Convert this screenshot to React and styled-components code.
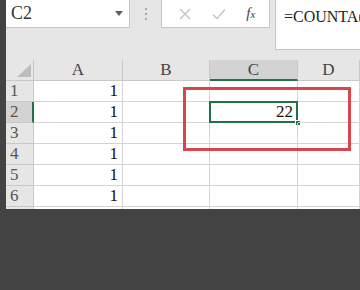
import React from "react";
import styled, { createGlobalStyle } from "styled-components";

const GlobalStyle = createGlobalStyle`
  html, body {
    margin: 0;
    padding: 0;
    background: #434343;
  }
`;

const Page = styled.div`
  width: 360px;
  height: 290px;
  padding-left: 6px;
  box-sizing: border-box;
  background: #434343;
  overflow: hidden;
`;

const Window = styled.div`
  position: relative;
  width: 354px;
  height: 209px;
  background: #e6e6e6;
  overflow: hidden;
  font-family: "Liberation Serif", "DejaVu Serif", serif;
`;

const Toolbar = styled.div`
  display: flex;
  align-items: flex-start;
  height: 60px;
`;

const NameBox = styled.div`
  width: 124px;
  height: 28px;
  box-sizing: border-box;
  background: #fff;
  border: 1px solid #c6c6c6;
  border-top: none;
  border-left: none;
  display: flex;
  align-items: center;
  justify-content: space-between;
  padding: 0 6px 0 5px;
  font-family: "Liberation Serif", serif;
  font-size: 18px;
  color: #333;
`;

const Caret = styled.span`
  width: 0;
  height: 0;
  border-left: 4px solid transparent;
  border-right: 4px solid transparent;
  border-top: 5px solid #606060;
`;

const Dots = styled.div`
  width: 31px;
  height: 28px;
  display: flex;
  flex-direction: column;
  align-items: center;
  justify-content: center;
  gap: 3px;
  span {
    width: 2px;
    height: 2px;
    background: #a8a8a8;
  }
`;

const FuncBox = styled.div`
  width: 109px;
  height: 28px;
  box-sizing: border-box;
  background: #fff;
  border: 1px solid #c6c6c6;
  border-top: none;
  display: flex;
  align-items: center;
  justify-content: space-around;
  padding: 0 4px 0 6px;
`;

const Fx = styled.span`
  font-family: "Liberation Serif", serif;
  font-style: italic;
  font-size: 15px;
  color: #444;
  small {
    font-size: 11px;
  }
`;

const FormulaBox = styled.div`
  margin-left: 5px;
  flex: 1;
  height: 50px;
  box-sizing: border-box;
  background: #fff;
  border: 1px solid #c6c6c6;
  border-top: none;
  border-right: none;
  padding: 8px 0 0 8px;
  font-family: "Liberation Serif", serif;
  font-size: 16px;
  color: #222;
  white-space: nowrap;
  overflow: hidden;
`;

const Grid = styled.div`
  display: grid;
  grid-template-columns: 28px 89px 87px 88px 62px;
  grid-auto-rows: 21px;
  background: #fff;
  font-family: "Liberation Serif", serif;
`;

const Corner = styled.div`
  background: #e6e6e6;
  border-right: 1px solid #c8c8c8;
  border-bottom: 1px solid #c8c8c8;
  box-sizing: border-box;
  display: flex;
  align-items: flex-end;
  justify-content: flex-end;
  padding: 0 2px 3px 0;
`;

const ColHead = styled.div`
  background: ${(p) => (p.$active ? "#d3d3d3" : "#e6e6e6")};
  border-right: 1px solid #c8c8c8;
  border-bottom: ${(p) => (p.$active ? "2px solid #217346" : "1px solid #c8c8c8")};
  box-sizing: border-box;
  display: flex;
  align-items: center;
  justify-content: center;
  font-size: 17px;
  color: #444;
`;

const RowHead = styled.div`
  background: ${(p) => (p.$active ? "#d3d3d3" : "#e6e6e6")};
  border-right: ${(p) => (p.$active ? "2px solid #217346" : "1px solid #c8c8c8")};
  border-bottom: 1px solid #c8c8c8;
  box-sizing: border-box;
  display: flex;
  align-items: center;
  padding-left: 4px;
  font-size: 17px;
  color: #555;
`;

const Cell = styled.div`
  position: relative;
  border-right: 1px solid #d4d4d4;
  border-bottom: 1px solid #d4d4d4;
  box-sizing: border-box;
  display: flex;
  align-items: center;
  justify-content: flex-end;
  padding-right: 4px;
  font-size: 17px;
  color: #111;
  ${(p) =>
    p.$selected &&
    `
    &::before {
      content: "";
      position: absolute;
      left: -1px;
      top: -1px;
      right: -1px;
      bottom: -1px;
      border: 2px solid #217346;
    }
    &::after {
      content: "";
      position: absolute;
      right: -4px;
      bottom: -4px;
      width: 6px;
      height: 6px;
      background: #217346;
      border: 1px solid #fff;
      box-sizing: border-box;
    }
  `}
`;

const Highlight = styled.div`
  position: absolute;
  left: 177px;
  top: 87px;
  width: 168px;
  height: 64px;
  box-sizing: border-box;
  border: 3px solid #d6464c;
  pointer-events: none;
`;

const columns = ["A", "B", "C", "D"];
const rows = [1, 2, 3, 4, 5, 6];

export default function App() {
  return (
    <>
      <GlobalStyle />
      <Page>
        <Window>
          <Toolbar>
            <NameBox>
              C2
              <Caret />
            </NameBox>
            <Dots>
              <span />
              <span />
              <span />
            </Dots>
            <FuncBox>
              <svg width="14" height="14" viewBox="0 0 14 14">
                <path d="M2 2 L12 12 M12 2 L2 12" stroke="#c4c4c4" strokeWidth="1.4" fill="none" />
              </svg>
              <svg width="16" height="14" viewBox="0 0 16 14">
                <path d="M2 7.5 L6 11.5 L14 2.5" stroke="#c4c4c4" strokeWidth="1.4" fill="none" />
              </svg>
              <Fx>
                f<small>x</small>
              </Fx>
            </FuncBox>
            <FormulaBox>=COUNTA(A1:A6)</FormulaBox>
          </Toolbar>
          <Grid>
            <Corner>
              <svg width="14" height="13" viewBox="0 0 14 13">
                <polygon points="14,0 14,13 0,13" fill="#bdbdbd" />
              </svg>
            </Corner>
            {columns.map((c) => (
              <ColHead key={c} $active={c === "C"}>
                {c}
              </ColHead>
            ))}
            {rows.map((r) => (
              <React.Fragment key={r}>
                <RowHead $active={r === 2}>{r}</RowHead>
                <Cell>1</Cell>
                <Cell />
                <Cell $selected={r === 2}>{r === 2 ? 22 : ""}</Cell>
                <Cell />
              </React.Fragment>
            ))}
            <RowHead />
            <Cell />
            <Cell />
            <Cell />
            <Cell />
          </Grid>
          <Highlight />
        </Window>
      </Page>
    </>
  );
}
